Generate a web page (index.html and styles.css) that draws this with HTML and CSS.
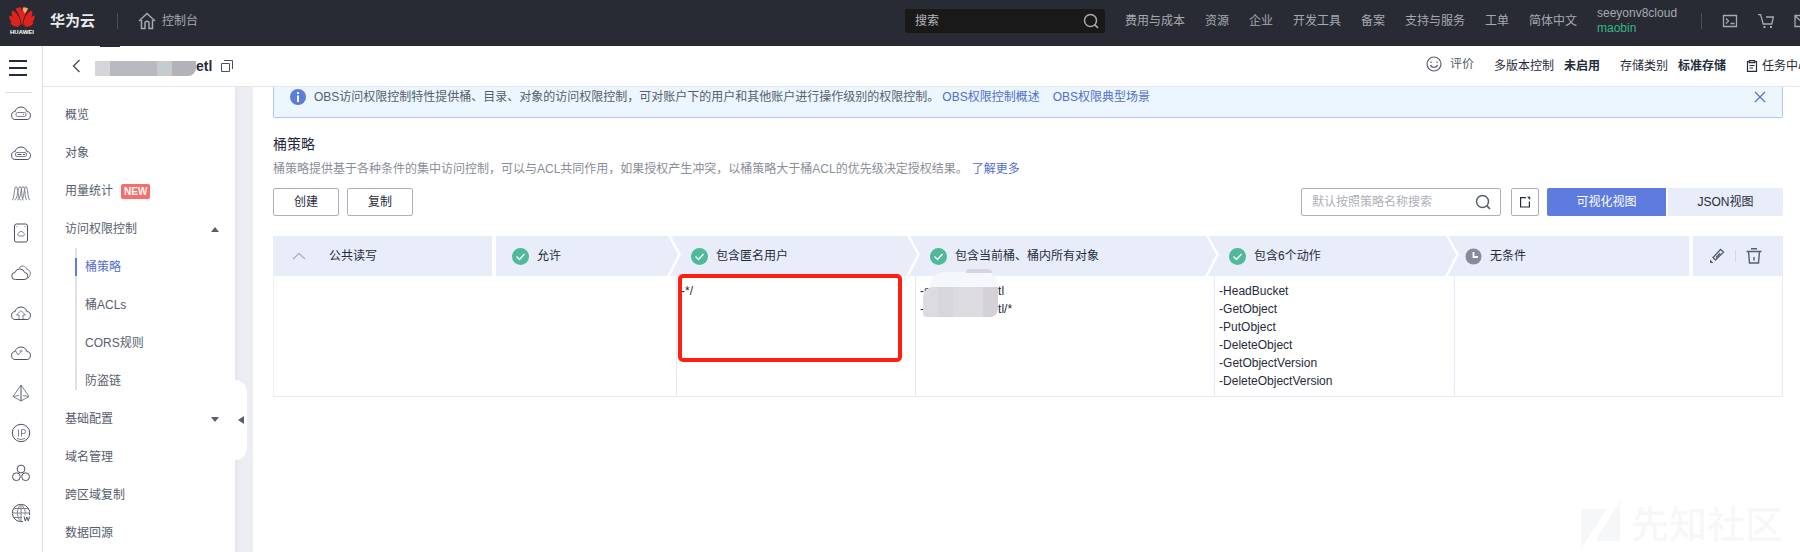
FILE: index.html
```html
<!DOCTYPE html>
<html lang="zh-CN">
<head>
<meta charset="utf-8">
<title>桶策略 - 华为云</title>
<link rel="stylesheet" href="styles.css">
</head>
<body>
<svg class="sprite" aria-hidden="true">
  <symbol id="check" viewBox="0 0 17 17"><circle cx="8.500" cy="8.500" r="8.500" fill="#50b99a"/><path d="M4.500 8.500l3 3 5-5.500" fill="none" stroke="#fff" stroke-width="1.300"/></symbol>
  <symbol id="chevron" viewBox="0 0 14 40"><path d="M2-1l10.500 19.500L1 41" fill="none" stroke="#fff" stroke-width="2.500"/></symbol>
  <symbol id="search" viewBox="0 0 16 16"><circle cx="7.500" cy="7.500" r="6" fill="none" stroke="currentColor" stroke-width="1.500"/><path d="M11.700 11.700L15 15" stroke="currentColor" stroke-width="1.700"/></symbol>
</svg>

<header class="topbar">
  <a class="logo" href="#">
    <svg width="26" height="20" viewBox="0 0 26 20" aria-hidden="true">
      <g fill="#e2231c">
        <path d="M12.700 18.500C12 12 9 5 6.400 2 8 .4 11.300 0 12.200.8c1.300 3 1.500 12 .5 17.700z"/>
        <path d="M13.300 18.500C14 12 17 5 19.600 2 18 .4 14.700 0 13.800.8c-1.300 3-1.500 12-.5 17.700z"/>
        <path d="M11.900 18.300C5 14 1.600 8.500 3 3.500c4 .5 8.600 8 8.900 14.800z"/>
        <path d="M14.100 18.300c6.900-4.300 10.300-9.800 8.900-14.800-4 .5-8.600 8-8.900 14.800z"/>
        <path d="M11 18.800C4 17.500-.3 13.500.3 8.500c4 .5 9 5.300 10.700 10.300z"/>
        <path d="M15 18.800c7-1.300 11.300-5.300 10.700-10.300-4 .5-9 5.300-10.700 10.300z"/>
        <path d="M10.500 19.400c-4.700.8-8.200-.4-9.300-4.400 3.500.3 6.600 2 9.300 4.400z"/>
        <path d="M15.500 19.400c4.700.8 8.200-.4 9.300-4.400-3.500.3-6.600 2-9.300 4.400z"/>
      </g>
      <path d="M16 6.500l3-4.800C17.800.4 15 0 14 .8c-.4 2 .4 4.300 2 5.700z" fill="#e9ad72"/>
    </svg>
    <span class="logo-text">HUAWEI</span>
  </a>
  <a class="brand" href="#">华为云</a>
  <span class="bar-rule"></span>
  <a class="console" href="#">
    <svg width="18" height="18" viewBox="0 0 18 18" fill="none" stroke="#a6a9b0" stroke-width="1.500" aria-hidden="true"><path d="M1 9l8-7.500L17 9M3.500 8v8.500H7v-5.500c0-2.500 4-2.500 4 0v5.500h3.500V8"/></svg>
    控制台
  </a>
  <nav class="top-right">
    <div class="top-search">
      <input type="text" aria-label="搜索" placeholder="搜索">
      <svg width="16" height="16"><use href="#search"/></svg>
    </div>
    <a href="#">费用与成本</a><a href="#">资源</a><a href="#">企业</a><a href="#">开发工具</a><a href="#">备案</a><a href="#">支持与服务</a><a href="#">工单</a><a href="#">简体中文</a>
    <a class="account" href="#"><span>seeyonv8cloud</span><span class="user">maobin</span></a>
    <span class="bar-rule"></span>
    <a class="top-icon" href="#" aria-label="终端"><svg width="16" height="16" viewBox="0 0 16 16" fill="none" stroke="currentColor" stroke-width="1.300"><path d="M1.500 2.500h13v11h-13zM4 5.500L6.500 8 4 10.500M8.500 10.500h4"/></svg></a>
    <a class="top-icon" href="#" aria-label="购物车"><svg width="16" height="16" viewBox="0 0 16 16" fill="none" stroke="currentColor" stroke-width="1.300"><path d="M0 1.600h2.600l2.600 9.400h8.600l1.600-7H8"/><path d="M5.500 14h2M12 14h2" stroke-width="2"/></svg></a>
    <a class="top-icon" href="#" aria-label="消息"><svg width="16" height="16" viewBox="0 0 16 16" fill="none" stroke="currentColor" stroke-width="1.300"><path d="M1 2.500h14v11H1zM1 3l7 6 7-6"/></svg></a>
  </nav>
</header>

<div class="shell">
  <nav class="rail" aria-label="服务">
    <button class="menu" aria-label="菜单"><i></i><i></i><i></i></button>
    <a href="#" aria-label="服务器"><svg viewBox="0 0 20 20"><path d="M5 16.500a4 4 0 0 1-.8-8A6 6 0 0 1 15.800 8.500a4 4 0 0 1-.8 8z"/><rect class="thin" x="5" y="9.500" width="10" height="4" rx="1.500"/><path class="thin" d="M12 11.500h1"/></svg></a>
    <a href="#" aria-label="裸金属"><svg viewBox="0 0 20 20"><path d="M5 16.500a4 4 0 0 1-.8-8A6 6 0 0 1 15.800 8.500a4 4 0 0 1-.8 8z"/><rect class="thin" x="4.500" y="9.500" width="11" height="4" rx="1.500"/><path d="M6.500 11.500h4M12 11.500h2"/></svg></a>
    <a href="#" aria-label="伸缩"><svg viewBox="0 0 20 20"><path class="thin" d="M1 17C3.500 17 3 3.500 5 3.500S7 17 9.500 17M3.500 17C7 17 6.500 3.500 9 3.500S10 17 12.500 17M6.500 17C10 17 9.500 3.500 12 3.500S13.500 17 16 17M10.500 17C13 17 13 3.500 15 3.500S16.500 17 19 17"/></svg></a>
    <a href="#" aria-label="存储"><svg viewBox="0 0 20 20"><rect x="3.500" y="1" width="13" height="18" rx="2"/><path class="thin" d="M8 13a1.600 1.600 0 0 1-.3-3 2.600 2.600 0 0 1 4.800 0 1.600 1.600 0 0 1-.4 3zM5.500 3.500h1M13.500 3.500h1"/></svg></a>
    <a href="#" aria-label="云"><svg viewBox="0 0 20 20"><path d="M4.500 16.500a3.500 3.500 0 0 1-.5-7 5 5 0 0 1 9.600 0 3.500 3.500 0 0 1-.6 7z"/><path class="thin" d="M8 5c2-3 7-2.500 8 1.500 4 .5 4.500 6 1 8.500"/></svg></a>
    <a href="#" aria-label="上传"><svg viewBox="0 0 20 20"><path d="M5 16.500a4 4 0 0 1-.8-8A6 6 0 0 1 15.800 8.500a4 4 0 0 1-.8 8z"/><path class="thin" d="M8 16v-4H5.500L10 7.500l4.500 4.500H12v4"/></svg></a>
    <a href="#" aria-label="监控"><svg viewBox="0 0 20 20"><path d="M5 16.500a4 4 0 0 1-.8-8A6 6 0 0 1 15.800 8.500a4 4 0 0 1-.8 8z"/><path class="thin" d="M4.500 7.500L7 12l4-4.500M8.500 8h3"/></svg></a>
    <a href="#" aria-label="网络"><svg viewBox="0 0 20 20"><path class="thin" d="M10 2L2 13.500l8 4.500 8-4.500zM2 13.500l6-1M18 13.500l-6-1"/><path d="M10 2v16"/></svg></a>
    <a href="#" aria-label="IP"><svg viewBox="0 0 20 20"><circle cx="10" cy="10" r="8.700"/><path class="thin" d="M7.500 6.500v7M10.500 13.500v-7h2a2 2 0 0 1 0 4h-2M6 15.500q4 2 8 0"/></svg></a>
    <a href="#" aria-label="安全"><svg viewBox="0 0 20 20"><circle cx="10" cy="6" r="3.900"/><circle cx="5.400" cy="13.700" r="3.900"/><circle cx="14.600" cy="13.700" r="3.900"/></svg></a>
    <a href="#" aria-label="域名"><svg viewBox="0 0 20 20"><path d="M12 18.500A8.700 8.700 0 1 1 18.500 12"/><path class="thin" d="M10 1.300c-5 5-5 12.400 0 17.400M10 1.300c3.500 3.300 4.700 7 4 11M10 1.300v17.400M1.300 10h17.400M2.500 5.500h15M2.500 14.500H11"/><path d="M13 13.500l1.300 4.500 1.500-4 1.500 4 1.300-4.500"/></svg></a>
  </nav>

  <div class="workspace">
    <header class="subheader">
      <i class="scrap"></i>
      <button class="back" aria-label="返回"><svg width="9" height="14" viewBox="0 0 9 14" fill="none" stroke="#4a4f62" stroke-width="1.400"><path d="M7.500 1L1.500 7l6 6"/></svg></button>
      <h1><span class="name-mask"><i></i><i></i><i></i><i></i><i></i></span>etl</h1>
      <button class="copy" aria-label="复制名称"><svg width="12" height="12" viewBox="0 0 12 12" fill="none" stroke="#4a4f62"><path d="M.5 3.500h8v8h-8zM3 .5h8.500V9"/></svg></button>
      <div class="sub-right">
        <a class="rate" href="#"><svg width="16" height="16" viewBox="0 0 16 16" fill="none" stroke="currentColor" stroke-width="1.200"><circle cx="8" cy="8" r="7"/><path d="M4.500 9c1 3 6 3 7 0M5 5.500v1.500M11 5.500v1.500"/></svg>评价</a>
        <span class="fact">多版本控制<b>未启用</b></span>
        <span class="fact">存储类别<b>标准存储</b></span>
        <a class="tasks" href="#"><svg width="12" height="12" viewBox="0 0 12 12" fill="none" stroke="currentColor" stroke-width="1.200"><path d="M3.500 1.600h-2v9.800h9V1.600h-2M3.500.6h5v2h-5zM3.500 5.500h5M3.500 8h3.500"/></svg>任务中心</a>
      </div>
    </header>

    <div class="columns">
      <nav class="side">
        <a href="#">概览</a>
        <a href="#">对象</a>
        <a href="#">用量统计<span class="new">NEW</span></a>
        <a href="#">访问权限控制<i class="tri up"></i></a>
        <div class="sub">
          <a class="active" href="#">桶策略</a>
          <a href="#">桶ACLs</a>
          <a href="#">CORS规则</a>
          <a href="#">防盗链</a>
        </div>
        <a href="#">基础配置<i class="tri down"></i></a>
        <a href="#">域名管理</a>
        <a href="#">跨区域复制</a>
        <a href="#">数据回源</a>
        <button class="collapse" aria-label="收起"><i></i></button>
      </nav>

      <main>
        <div class="notice">
          <svg width="16" height="16" viewBox="0 0 16 16"><circle cx="8" cy="8" r="8" fill="#5e7ce0"/><path d="M8 3v2M8 6.500V13" stroke="#fff" stroke-width="2"/></svg>
          <p>OBS访问权限控制特性提供桶、目录、对象的访问权限控制，可对账户下的用户和其他账户进行操作级别的权限控制。<a href="#">OBS权限控制概述</a><a href="#">OBS权限典型场景</a></p>
          <button class="close" aria-label="关闭"><svg width="12" height="12" viewBox="0 0 12 12" stroke="#5170d8" stroke-width="1.200"><path d="M1 1l10 10M11 1L1 11"/></svg></button>
        </div>

        <h2>桶策略</h2>
        <p class="desc">桶策略提供基于各种条件的集中访问控制，可以与ACL共同作用，如果授权产生冲突，以桶策略大于桶ACL的优先级决定授权结果。<a href="#">了解更多</a></p>

        <div class="tools">
          <button class="btn">创建</button>
          <button class="btn">复制</button>
          <div class="find">
            <input type="text" aria-label="策略名称" placeholder="默认按照策略名称搜索">
            <svg width="16" height="16"><use href="#search"/></svg>
          </div>
          <button class="export" aria-label="导出"><svg width="12" height="12" viewBox="0 0 12 12" fill="none" stroke="#252b3a" stroke-width="1.200"><path d="M7 1.600H1.600v9.400h8.800V5.500"/><path d="M8 .8h3.200V4z" fill="#252b3a" stroke="none"/></svg></button>
          <div class="views"><button class="on">可视化视图</button><button>JSON视图</button></div>
        </div>

        <table>
          <colgroup><col class="c-name"><col class="c-effect"><col class="c-user"><col class="c-res"><col class="c-act"><col><col class="c-ops"></colgroup>
          <thead>
            <tr>
              <th class="first"><div class="h"><button class="fold" aria-label="折叠"><svg width="14" height="8" viewBox="0 0 14 8" fill="none" stroke="#adb0b8" stroke-width="1.300"><path d="M1 7l6-5.500L13 7"/></svg></button>公共读写</div></th>
              <th><div class="h wide"><svg width="17" height="17"><use href="#check"/></svg>允许</div></th>
              <th><svg class="chev" width="14" height="40"><use href="#chevron"/></svg><div class="h"><svg width="17" height="17"><use href="#check"/></svg>包含匿名用户</div></th>
              <th><svg class="chev" width="14" height="40"><use href="#chevron"/></svg><div class="h"><svg width="17" height="17"><use href="#check"/></svg>包含当前桶、桶内所有对象</div></th>
              <th><svg class="chev" width="14" height="40"><use href="#chevron"/></svg><div class="h"><svg width="17" height="17"><use href="#check"/></svg>包含6个动作</div></th>
              <th><svg class="chev" width="14" height="40"><use href="#chevron"/></svg><div class="h near"><svg width="17" height="17" viewBox="0 0 17 17"><circle cx="8.500" cy="8.500" r="8" fill="#8a8b9a"/><path d="M8.500 4v5h4.500" fill="none" stroke="#fff" stroke-width="1.800"/></svg>无条件</div></th>
              <th class="ops"><div class="h-ops">
                <button aria-label="编辑"><svg width="16" height="16" viewBox="0 0 16 16" fill="none" stroke="#575d6c" stroke-width="1.300"><path d="M4 9.500L11.500 1.500l3 2.500L6.500 12zM7 9.500l4-4.300"/><path d="M1 11.500v3.500h3.500z" fill="#575d6c" stroke="none"/></svg></button>
                <i></i>
                <button aria-label="删除"><svg width="16" height="16" viewBox="0 0 16 16" fill="none" stroke="#575d6c" stroke-width="1.400"><path d="M0.500 3.500h15M5 .8h6M2.500 3.500l1 11.500h9l1-11.500M8 9v3.500"/></svg></button>
              </div></th>
            </tr>
          </thead>
          <tbody>
            <tr>
              <td colspan="2"></td>
              <td>-*/<span class="marker"></span></td>
              <td><span class="masked">-s</span>tl<br><span class="masked">-</span>tl/*<span class="cloud"></span><span class="blocks"><i></i><i></i><i></i><i></i><i></i></span></td>
              <td>-HeadBucket<br>-GetObject<br>-PutObject<br>-DeleteObject<br>-GetObjectVersion<br>-DeleteObjectVersion</td>
              <td colspan="2"></td>
            </tr>
          </tbody>
        </table>
      </main>
    </div>
  </div>
</div>

<div class="watermark"><svg width="40" height="48" viewBox="0 0 40 48" fill="currentColor"><path d="M0 8h26L0 48zM39 0v40H14z"/></svg>先知社区</div>
</body>
</html>
```
FILE: styles.css
```css
* { box-sizing: border-box; }
body {
  margin: 0;
  height: 100vh;
  overflow: hidden;
  display: flex;
  flex-direction: column;
  font: 12px/18px "Liberation Sans", "Noto Sans CJK SC", sans-serif;
  color: #252b3a;
  background: #fff;
}
a { color: inherit; text-decoration: none; }
p, h1, h2 { margin: 0; }
button { font: inherit; color: inherit; padding: 0; border: 0; background: none; cursor: pointer; }
input { font: inherit; border: 0; outline: 0; background: none; min-width: 0; flex: 1; padding: 0; }
svg { display: block; flex: none; }
.sprite { position: absolute; width: 0; height: 0; }

.topbar {
  flex: none;
  height: 46px;
  padding: 0 0 4px 8px;
  display: flex;
  align-items: center;
  background: #282b33;
  color: #a6a9b0;
}
.logo { width: 28px; display: flex; flex-direction: column; align-items: center; gap: 1px; }
.logo-text { font: bold 6px/8px "Liberation Sans", sans-serif; color: #fff; }
.brand { margin-left: 14px; font-size: 15px; font-weight: bold; color: #e9eaec; }
.bar-rule { width: 1px; height: 16px; background: #4a4d55; }
.topbar > .bar-rule { margin-left: 22px; }
.console { margin-left: 20px; display: flex; align-items: center; gap: 6px; }
.top-right { margin-left: auto; margin-right: -10px; display: flex; align-items: center; gap: 20px; white-space: nowrap; }
.top-search {
  width: 200px;
  height: 24px;
  padding: 0 6px 0 10px;
  display: flex;
  align-items: center;
  background: #191919;
  border-radius: 2px;
}
.top-search input { color: #c8cace; }
.top-search input::placeholder { color: #b4b6bb; opacity: 1; }
.account { min-width: 84px; display: flex; flex-direction: column; line-height: 15px; }
.user { color: #35b782; }

.shell { flex: 1; min-height: 0; display: flex; }
.rail { flex: none; width: 43px; border-right: 1px solid #dcdde3; display: flex; flex-direction: column; align-items: center; }
.menu {
  align-self: flex-start;
  width: 27px;
  height: 47px;
  margin-left: 5px;
  padding: 14px 4px 16px;
  display: flex;
  flex-direction: column;
  justify-content: space-between;
  border-bottom: 1px solid #dcdde3;
}
.menu i { width: 18px; height: 2px; background: #252b3a; }
.rail a { height: 40px; display: flex; align-items: center; }
.rail svg { width: 20px; height: 20px; fill: none; stroke: #4d5062; }
.rail .thin { stroke: #7d8092; }

.workspace { flex: 1; min-width: 0; display: flex; flex-direction: column; }
.subheader {
  position: relative;
  flex: none;
  height: 41px;
  padding-left: 29px;
  display: flex;
  align-items: center;
  border-bottom: 1px solid #e3e5ef;
}
.scrap { position: absolute; left: 57px; top: 0; width: 20px; height: 1px; background: #26243f; }
h1 { margin-left: 14px; display: flex; align-items: center; font-size: 14px; line-height: 18px; }
.name-mask { display: flex; width: 101px; height: 15px; margin-top: 5px; border-radius: 0 0 8px 0; overflow: hidden; }
.name-mask i { flex: 1; background: #b9babf; }
.name-mask i:first-child { flex: 0 0 15px; background: #d6d6da; }
.name-mask i:nth-child(4) { flex: 0 0 15px; background: #c6cbcd; }
.name-mask i:nth-child(5) { background: #b2b2b8; }
.copy { margin-left: 9px; }
.sub-right { margin-left: auto; margin-right: -10px; display: flex; align-items: center; gap: 20px; white-space: nowrap; }
.rate { display: flex; align-items: center; gap: 8px; margin-bottom: 4px; color: #575d6c; }
.fact b { margin-left: 10px; }
.tasks { display: flex; align-items: center; gap: 4px; }

.columns { flex: 1; min-height: 0; display: flex; background: linear-gradient(90deg, #e6e7ed 192px, #edeef4 198px); }
.side { position: relative; flex: none; width: 192px; padding-top: 9px; background: #fff; color: #575d6c; }
.side a { height: 38px; padding: 0 16px 0 22px; display: flex; align-items: center; }
.new { margin-left: 8px; padding: 0 3px; font-size: 10px; line-height: 15px; font-weight: bold; color: #fff; background: #fa6c68; border-radius: 2px; }
.tri { margin-left: auto; border: 4px solid transparent; }
.up { border-top: 0; border-bottom: 5px solid #575d6c; }
.down { border-bottom: 0; border-top: 5px solid #575d6c; }
.sub { margin-left: 32px; background: linear-gradient(#dfe1e8, #dfe1e8) 0 0 / 2px 142px no-repeat; }
.sub a { padding-left: 10px; }
.sub .active { color: #526ecc; background: linear-gradient(#5e7ce0, #5e7ce0) 0 10px / 2px 18px no-repeat; }
.collapse {
  position: absolute;
  left: 100%;
  top: 293px;
  width: 12px;
  height: 80px;
  background: #fff;
  border-radius: 0 12px 12px 0;
}
.collapse i { display: block; margin-left: 3px; width: 0; border: 4px solid transparent; border-left: 0; border-right: 6px solid #575d6c; }

main { flex: 1; min-width: 0; margin-left: 18px; padding: 0 17px 0 20px; background: #fff; }
.notice {
  height: 31px;
  padding: 0 16px 10px 16px;
  display: flex;
  align-items: center;
  gap: 8px;
  background: #ebf6ff;
  border: 1px solid #b5c6f5;
  border-top: 0;
  border-radius: 0 0 2px 2px;
  color: #575d6c;
}
.notice p { flex: 1; white-space: nowrap; }
.notice p a { color: #526ecc; margin-left: 3px; }
.notice p a + a { margin-left: 13px; }
h2 { margin-top: 16px; font-size: 14px; line-height: 20px; font-weight: normal; }
.desc { margin-top: 6px; color: #8a8e99; white-space: nowrap; }
.desc a { color: #526ecc; margin-left: 4px; }

.tools { margin-top: 10px; display: flex; gap: 8px; }
.btn, .export, .find { height: 28px; border: 1px solid #adb0b8; border-radius: 2px; }
.btn { width: 66px; }
.find { width: 200px; margin-left: auto; padding: 0 9px 0 10px; display: flex; align-items: center; color: #575d6c; }
.find input::placeholder { color: #adb0b8; opacity: 1; }
.export { width: 28px; margin-left: 2px; display: flex; align-items: center; justify-content: center; }
.views { display: flex; gap: 2px; }
.views button { width: 115px; background: #e9edfa; border-radius: 0 2px 2px 0; }
.views .on { width: 119px; background: #5e7ce0; color: #fff; border-radius: 2px 0 0 2px; }

table { margin-top: 20px; width: 100%; table-layout: fixed; border-spacing: 0; }
.c-name { width: 14.770%; }
.c-effect { width: 11.990%; }
.c-user { width: 15.830%; }
.c-res { width: 19.800%; }
.c-act { width: 15.890%; }
.c-ops { width: 94px; }
th { position: relative; height: 40px; padding: 0; font-weight: normal; text-align: left; background: #e9edfa; }
th.first { border-right: 4px solid #fff; }
th.ops { border-left: 4px solid #fff; }
.h { display: flex; align-items: center; gap: 8px; padding-left: 14px; white-space: nowrap; }
.wide { padding-left: 16px; }
.near { padding-left: 10px; }
.first .h { padding-left: 19px; gap: 23px; }
.chev { position: absolute; left: -10px; top: 0; }
.h-ops { display: flex; align-items: center; justify-content: center; gap: 10px; padding-right: 6px; }
.h-ops i { width: 1px; height: 12px; background: #d4d8e6; }
td { position: relative; height: 121px; padding: 6px 4px; vertical-align: top; border-right: 1px solid #e6eaf8; border-bottom: 1px solid #e6eaf8; }
td:first-child { border-left: 1px solid #eef0f6; }
.marker { position: absolute; left: 1px; top: -2px; width: 224px; height: 88px; border: 4px solid #ff1e12; border-radius: 5px; }
.masked { display: inline-block; width: 78px; }
.cloud { position: absolute; left: 14px; top: -4px; width: 68px; height: 16px; border-radius: 14px 14px 0 0; background: #f4f7fc; }
.cloud::before { content: ""; position: absolute; right: 6px; top: -3px; width: 26px; height: 4px; border-radius: 12px 12px 0 0; background: #d6d5df; }
.blocks { position: absolute; left: 7px; top: 11px; width: 75px; height: 30px; display: flex; border-radius: 10px 0 8px 4px; overflow: hidden; }
.blocks i { flex: 1; background: #dcdce0; }
.blocks i:nth-child(2) { background: #d6d6dc; }
.blocks i:nth-child(5) { background: #d4d1d9; }

.watermark {
  position: fixed;
  right: 17px;
  bottom: 3px;
  display: flex;
  align-items: center;
  gap: 10px;
  font-size: 38px;
  line-height: 48px;
  font-weight: 500;
  color: #f6f7f8;
}
```
